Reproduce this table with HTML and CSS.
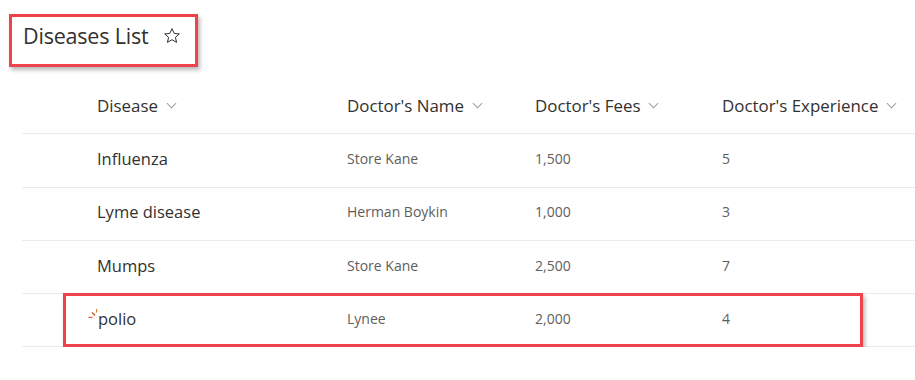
FILE: index.html
```html
<!DOCTYPE html>
<html lang="en">
<head>
    <meta charset="UTF-8">
    <title>Diseases List</title>
    <link rel="stylesheet" href="styles.css">
</head>
<body>
    <div class="title-box">
        <div class="title">Diseases List</div>
        <svg class="star" viewBox="0 0 18 18" width="18" height="18">
            <path d="M9 1.6 L11.2 6.4 L16.3 6.9 L12.4 10.3 L13.6 15.4 L9 12.7 L4.4 15.4 L5.6 10.3 L1.7 6.9 L6.8 6.4 Z"
                  fill="none" stroke="#323130" stroke-width="1" stroke-linejoin="round"/>
        </svg>
    </div>

    <div class="list">
        <div class="row head">
            <div class="cell">Disease <span class="chev"></span></div>
            <div class="cell">Doctor's Name <span class="chev"></span></div>
            <div class="cell">Doctor's Fees <span class="chev"></span></div>
            <div class="cell">Doctor's Experience <span class="chev"></span></div>
        </div>
        <div class="row">
            <div class="cell main">Influenza</div>
            <div class="cell">Store Kane</div>
            <div class="cell">1,500</div>
            <div class="cell">5</div>
        </div>
        <div class="row">
            <div class="cell main">Lyme disease</div>
            <div class="cell">Herman Boykin</div>
            <div class="cell">1,000</div>
            <div class="cell">3</div>
        </div>
        <div class="row">
            <div class="cell main">Mumps</div>
            <div class="cell">Store Kane</div>
            <div class="cell">2,500</div>
            <div class="cell">7</div>
        </div>
        <div class="row marked">
            <div class="cell main">
                <svg class="new-icon" viewBox="0 0 10 10" width="10" height="10">
                    <path d="M0.5 9.5 H4.5" stroke="#e8572a" stroke-width="1.3"/>
                    <path d="M4 4.5 L7 7.5" stroke="#c6501c" stroke-width="1.2"/>
                    <path d="M8.6 1 V4.5" stroke="#d9803a" stroke-width="1.1"/>
                </svg>polio
            </div>
            <div class="cell">Lynee</div>
            <div class="cell">2,000</div>
            <div class="cell">4</div>
            <div class="highlight"></div>
        </div>
    </div>
</body>
</html>
```

FILE: styles.css
```css
:root {
    --text-dark: #323130;
    --text-grey: #605e5c;
    --line: #edebe9;
    --mark-red: #f0424b;
}

body {
    margin: 0;
    font-family: 'Open Sans', 'Noto Sans', sans-serif;
    color: var(--text-dark);
    background: #fff;
}

.title-box {
    display: flex;
    align-items: flex-start;
    gap: 15px;
    box-sizing: border-box;
    width: 189px;
    height: 53px;
    margin: 14px 0 0 9px;
    padding: 5px 0 0 11px;
    border: 3px solid var(--mark-red);
    box-shadow: 2px 3px 4px rgba(0, 0, 0, 0.28);
}

.title {
    font-size: 21.5px;
    font-weight: 500;
    line-height: 28px;
    letter-spacing: -0.2px;
}

.star {
    margin-top: 5px;
}

.list {
    margin: 14px 0 0 22px;
}

.row {
    display: grid;
    grid-template-columns: 250px 188px 187px 1fr;
    align-items: center;
    height: 53.3px;
    box-sizing: border-box;
    padding: 0 0 4px 75px;
    border-bottom: 1px solid var(--line);
    position: relative;
    font-size: 14px;
    color: var(--text-grey);
}

.row.head {
    font-size: 16.9px;
    color: var(--text-dark);
}

.cell {
    display: flex;
    align-items: center;
    white-space: nowrap;
}

.cell.main {
    font-size: 16.5px;
    color: var(--text-dark);
}

.chev {
    display: inline-block;
    width: 6px;
    height: 6px;
    margin: -4px 0 0 10px;
    border-right: 1px solid #a19f9d;
    border-bottom: 1px solid #a19f9d;
    transform: rotate(45deg);
}

.new-icon {
    margin: -10px 0 0 -9px;
}

.highlight {
    position: absolute;
    left: 41px;
    top: -1px;
    width: 800px;
    height: 54px;
    box-sizing: border-box;
    border: 3px solid var(--mark-red);
    box-shadow: 2px 3px 4px rgba(0, 0, 0, 0.28);
}
```
